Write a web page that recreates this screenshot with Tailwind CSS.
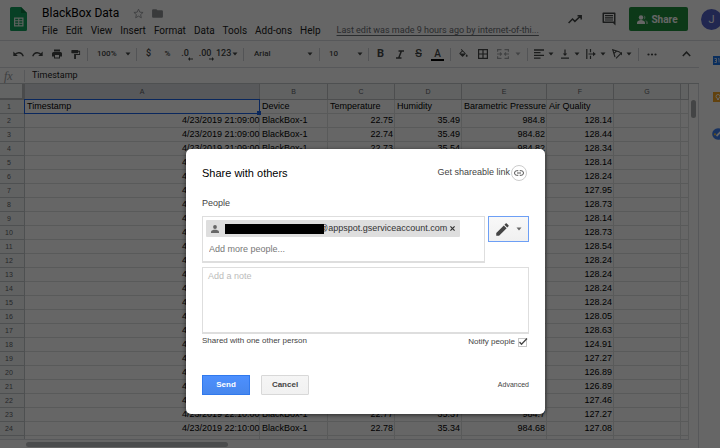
<!DOCTYPE html>
<html lang="en">
<head>
<meta charset="utf-8">
<meta name="viewport" content="width=device-width, initial-scale=1">
<title>BlackBox Data</title>
<script src="https://cdn.jsdelivr.net/npm/@tailwindcss/browser@4"></script>
</head>
<body class="relative h-screen overflow-hidden bg-white font-[Roboto,sans-serif] text-[#222]">

<svg class="hidden" aria-hidden="true">
  <symbol id="caret" viewBox="0 0 6 4"><path d="M0.5 0.5h5L3 3.4z" fill="currentColor"/></symbol>
</svg>

<div class="flex h-full flex-col">
  <header class="flex h-[41px] shrink-0 border-b border-[#dadce0]">
    <a href="#" aria-label="Sheets home" class="ml-[10px] mt-[7px] block shrink-0">
      <svg class="h-[24px] w-[17px]" viewBox="0 0 17 24"><path d="M1.5 0H11l6 6v16.5a1.5 1.5 0 0 1-1.5 1.5h-14A1.5 1.5 0 0 1 0 22.5v-21A1.5 1.5 0 0 1 1.5 0z" fill="#12a05c"/><path d="M11 0l6 6h-6z" fill="#0b7a43"/><path fill-rule="evenodd" d="M4 10.500h9.500v9H4zM5.200 11.700v1.500h3v-1.500zM9.300 11.700v1.500h3v-1.500zM5.200 14.200v1.600h3v-1.600zM9.300 14.200v1.600h3v-1.600zM5.200 16.800v1.500h3v-1.500zM9.300 16.800v1.500h3v-1.500z" fill="#e8f3ec"/></svg>
    </a>
    <div class="ml-[15px] min-w-0 flex-1">
      <div class="mt-[5px] flex h-[16px] items-center">
        <h1 class="text-[12px] leading-4 text-black">BlackBox Data</h1>
        <button aria-label="Star" class="ml-[14px]"><svg class="size-[11px]" viewBox="0 0 24 24" fill="none" stroke="#9a9da1" stroke-width="2"><path d="M12 2.500l2.900 6.600 7.100.600-5.400 4.700 1.600 7L12 17.700l-6.200 3.700 1.600-7L2 9.700l7.100-.600z"/></svg></button>
        <button aria-label="Move to folder" class="ml-[7px]"><svg class="size-[13px]" viewBox="0 0 24 24" fill="#8e9195"><path d="M10 4H4a2 2 0 0 0-2 2v12a2 2 0 0 0 2 2h16a2 2 0 0 0 2-2V8a2 2 0 0 0-2-2h-8z"/></svg></button>
      </div>
      <nav class="mt-[3px] flex h-[13px] items-center gap-2 whitespace-nowrap text-[10px] leading-[13px]">
        <button>File</button><button>Edit</button><button>View</button><button>Insert</button><button>Format</button><button>Data</button><button>Tools</button><button>Add-ons</button><button>Help</button>
        <a href="#" class="ml-2 text-[9px] text-[#6a6e73] underline underline-offset-2">Last edit was made 9 hours ago by internet-of-thi...</a>
      </nav>
    </div>
    <div class="flex h-[38px] shrink-0 items-center">
      <button aria-label="Activity"><svg class="h-[9px] w-[14px]" viewBox="0 0 14 9" fill="none" stroke="#444746" stroke-width="1.500"><path d="M.6 8L4.500 4l2.400 2.400L12.500 1M9.500.800h3.700v3.700"/></svg></button>
      <button aria-label="Comments" class="ml-[20px]"><svg class="size-[14px]" viewBox="0 0 14 14"><path fill-rule="evenodd" d="M1.200.500h11.600c.5 0 .7.300.7.700v12.300L11 11H1.200C.8 11 .5 10.800.5 10.300V1.200c0-.4.3-.7.7-.7zM2 1.900v7.700h10V1.900z" fill="#444746"/><path d="M3 3h8v1.200H3zM3 5.200h8v1.200H3zM3 7.400h8v1.200H3z" fill="#444746"/></svg></button>
      <button class="ml-[13px] flex h-[24px] w-[59px] items-center justify-center gap-[3px] rounded-[2px] bg-[#1e8e3e] pr-[2px] text-[10px] font-bold text-white">
        <svg class="h-[9px] w-[11px]" viewBox="0 0 22 18" fill="currentColor"><circle cx="8" cy="5" r="4.500"/><path d="M0 18v-3c0-3 5-5 8-5s8 2 8 5v3z"/><path d="M13 1a4 4 0 1 1 0 8c1.500-2 1.500-6 0-8zM16 10.500c3 .6 6 2 6 4.500v3h-4v-3c0-2-.7-3.300-2-4.500z" opacity=".5"/></svg>
        Share
      </button>
      <button aria-label="Account" class="-mr-[2px] ml-[13px] size-[21px] rounded-full bg-[#5361c9] text-[11px] leading-[21px] text-white">J</button>
    </div>
  </header>

  <div class="flex min-h-0 flex-1">
    <main class="flex min-w-0 flex-1 flex-col">
      <div role="toolbar" aria-label="Formatting" class="flex h-[27px] shrink-0 items-center border-b border-[#dadce0] pl-[9px] text-[8px] font-medium text-[#444746]">
        <button aria-label="Undo" class="flex w-[19px] justify-center"><svg class="h-[6px] w-[11px]" viewBox="0 0 11 6" fill="none" stroke="currentColor" stroke-width="1.300"><path d="M1.500 4C4 .800 8.500.800 10.300 5.200"/><path d="M.300.500V5h4.500z" fill="currentColor" stroke="none"/></svg></button>
        <button aria-label="Redo" class="flex w-[19px] justify-center"><svg class="h-[6px] w-[11px]" viewBox="0 0 11 6" fill="none" stroke="currentColor" stroke-width="1.300"><path d="M9.500 4C7 .800 2.500.800.700 5.200"/><path d="M10.700.500V5H6.200z" fill="currentColor" stroke="none"/></svg></button>
        <button aria-label="Print" class="flex w-[19px] justify-center"><svg class="size-[12px]" viewBox="0 0 24 24" fill="currentColor"><path d="M19 8H5a3 3 0 0 0-3 3v6h4v4h12v-4h4v-6a3 3 0 0 0-3-3zm-3 11H8v-5h8zM18 3H6v4h12z"/></svg></button>
        <button aria-label="Paint format" class="flex w-[19px] justify-center"><svg class="size-[11px]" viewBox="0 0 24 24" fill="currentColor"><path d="M18 4V3a1 1 0 0 0-1-1H4a1 1 0 0 0-1 1v5a1 1 0 0 0 1 1h13a1 1 0 0 0 1-1V6h2v5H9v10a1 1 0 0 0 1 1h2a1 1 0 0 0 1-1v-8h9V4z"/></svg></button>
        <span class="ml-[2px] h-[13px] w-px bg-[#d0d3d7]"></span>
        <label class="grid w-[48px] items-center"><select aria-label="Zoom" class="col-start-1 row-start-1 w-full appearance-none pl-[9px]"><option>100%</option></select><svg class="col-start-1 row-start-1 mr-[5px] h-[4px] w-[6px] justify-self-end"><use href="#caret"/></svg></label>
        <span class="h-[13px] w-px bg-[#d0d3d7]"></span>
        <button aria-label="Currency" class="ml-[2px] w-[19px] text-[9px]">$</button>
        <button aria-label="Percent" class="w-[19px]">%</button>
        <button aria-label="Decrease decimals" class="relative w-[16px] text-[9px]">.0<svg class="absolute right-0 top-[10px] h-[4px] w-[5px]" viewBox="0 0 5 4"><path d="M5 1.500H2V0L0 2l2 2V2.500h3z" fill="currentColor"/></svg></button>
        <button aria-label="Increase decimals" class="relative ml-[3px] w-[18px] text-[9px]">.00<svg class="absolute right-0 top-[10px] h-[4px] w-[5px]" viewBox="0 0 5 4"><path d="M0 1.500h3V0l2 2-2 2V2.500H0z" fill="currentColor"/></svg></button>
        <button aria-label="More formats" class="ml-[2px] flex w-[22px] items-center justify-between text-[9px]">123<svg class="h-[4px] w-[6px]"><use href="#caret"/></svg></button>
        <span class="ml-[5px] h-[13px] w-px bg-[#d0d3d7]"></span>
        <label class="grid w-[75px] items-center"><select aria-label="Font" class="col-start-1 row-start-1 w-full appearance-none pl-[10px]"><option>Arial</option></select><svg class="col-start-1 row-start-1 mr-[6px] h-[4px] w-[6px] justify-self-end"><use href="#caret"/></svg></label>
        <span class="h-[13px] w-px bg-[#d0d3d7]"></span>
        <label class="grid w-[48px] items-center"><select aria-label="Font size" class="col-start-1 row-start-1 w-full appearance-none pl-[9px]"><option>10</option></select><svg class="col-start-1 row-start-1 mr-[5px] h-[4px] w-[6px] justify-self-end"><use href="#caret"/></svg></label>
        <span class="mr-[2px] h-[13px] w-px bg-[#d0d3d7]"></span>
        <button aria-label="Bold" class="w-[19px] text-[11px] font-bold">B</button>
        <button aria-label="Italic" class="flex w-[19px] justify-center"><svg class="h-[9px] w-[8px]" viewBox="0 0 8 9" fill="none" stroke="currentColor" stroke-width="1.500"><path d="M2.500 1H8M0 8h5.500M5.400 1L2.700 8"/></svg></button>
        <button aria-label="Strikethrough" class="w-[19px] text-[11px] line-through">S</button>
        <button aria-label="Text colour" class="flex w-[19px] flex-col items-center text-[10px] leading-[11px]">A<span class="h-[2px] w-[13px] bg-black"></span></button>
        <span class="mx-[3px] h-[13px] w-px bg-[#d0d3d7]"></span>
        <button aria-label="Fill colour" class="flex w-[19px] justify-center"><svg class="size-[11px]" viewBox="0 0 24 24" fill="currentColor"><path fill-rule="evenodd" d="M16.600 9L7.600 0 6.200 1.400l2.400 2.400-5.200 5.100c-.6.600-.6 1.600 0 2.200l5.500 5.500c.6.600 1.600.600 2.200 0l5.500-5.500c.5-.6.500-1.500-.1-2.100zM5.200 10L10 5.200l4.800 4.800z"/><path d="M19 11.500s-2 2.200-2 3.500a2 2 0 0 0 4 0c0-1.300-2-3.500-2-3.500z"/></svg></button>
        <button aria-label="Borders" class="flex w-[19px] justify-center"><svg class="size-[10px]" viewBox="0 0 10 10" fill="none" stroke="currentColor" stroke-width="1.200"><path d="M.6.600h8.800v8.800H.6zM5 .600v8.800M.6 5h8.800"/></svg></button>
        <button aria-label="Merge cells" class="ml-[5px] flex w-[29px] items-center gap-[6px] text-[#a5a8ab]"><svg class="h-[10px] w-[12px]" viewBox="0 0 12 10" fill="none" stroke="currentColor" stroke-width="1.200"><path d="M4.500.600H.6v2.200M.6 7.200v2.200h3.900M7.500.600h3.900v2.200M11.400 7.200v2.200H7.500M0 5h4M12 5H8M3 3.500L4.500 5 3 6.500M9 3.500L7.500 5 9 6.500"/></svg><svg class="h-[4px] w-[6px]"><use href="#caret"/></svg></button>
        <span class="ml-[1px] mr-[6px] h-[13px] w-px bg-[#d0d3d7]"></span>
        <button aria-label="Horizontal align" class="flex w-[26px] items-center gap-[4px]"><svg class="size-[10px]" viewBox="0 0 10 10" stroke="currentColor" stroke-width="1.300"><path d="M0 1h10M0 3.700h6.500M0 6.400h10M0 9.100h6.500"/></svg><svg class="h-[4px] w-[6px]"><use href="#caret"/></svg></button>
        <button aria-label="Vertical align" class="flex w-[26px] items-center gap-[4px]"><svg class="size-[10px]" viewBox="0 0 10 10" stroke="currentColor" stroke-width="1.200"><path d="M1 9.200h8M5 .500V5"/><path d="M2.800 4.500h4.400L5 7z" fill="currentColor" stroke="none"/></svg><svg class="h-[4px] w-[6px]"><use href="#caret"/></svg></button>
        <button aria-label="Text wrapping" class="flex w-[26px] items-center gap-[4px]"><svg class="size-[10px]" viewBox="0 0 10 10" stroke="currentColor" stroke-width="1.200"><path d="M.8 0v10M4.500 0v3.200M4.500 6.800V10M2.500 5h5"/><path d="M7 2.800L9.800 5 7 7.200z" fill="currentColor" stroke="none"/></svg><svg class="h-[4px] w-[6px]"><use href="#caret"/></svg></button>
        <button aria-label="Text rotation" class="flex w-[26px] items-center gap-[4px]"><svg class="size-[10px]" viewBox="0 0 10 10" fill="none" stroke="currentColor" stroke-width="1.100"><path d="M3 8L.7.700l7 2.200M1.800 4.600L4.700 1.900M4 9.300L8.700 4.600"/><path d="M10 3.300v3.200L6.800 3.300z" fill="currentColor" stroke="none"/></svg><svg class="h-[4px] w-[6px]"><use href="#caret"/></svg></button>
        <span class="mr-[3px] h-[13px] w-px bg-[#d0d3d7]"></span>
        <button aria-label="More" class="flex w-[19px] justify-center"><svg class="h-[3px] w-[10px]" viewBox="0 0 10 3" fill="currentColor"><circle cx="1.500" cy="1.500" r="1.100"/><circle cx="5" cy="1.500" r="1.100"/><circle cx="8.500" cy="1.500" r="1.100"/></svg></button>
        <button aria-label="Hide the menus" class="ml-auto mr-[8px]"><svg class="h-[6px] w-[9px]" viewBox="0 0 9 6" fill="none" stroke="currentColor" stroke-width="1.500"><path d="M.8 5l3.700-3.800L8.200 5"/></svg></button>
      </div>

      <div class="flex h-[15px] shrink-0 items-center">
        <label for="formula" class="w-[25px] border-r border-[#dadce0] pl-[4px] font-['Liberation_Serif',serif] text-[12px] italic leading-[12px] text-[#9a9da1]">fx</label>
        <input id="formula" value="Timestamp" class="min-w-0 flex-1 pl-[7px] text-[9px] outline-none">
      </div>

      <div class="flex min-h-0 flex-1 border-t border-[#c4c7ca]">
        <div class="flex min-w-0 flex-1 flex-col">
          <div class="relative h-[355px] overflow-hidden">
            <table class="w-full table-fixed border-separate border-spacing-0 font-['Liberation_Sans',sans-serif] text-[9px] leading-[13px] text-black">
              <colgroup><col class="w-[25px]"><col><col class="w-[68px]"><col class="w-[67px]"><col class="w-[67px]"><col class="w-[85px]"><col class="w-[67px]"><col class="w-[67px]"><col class="w-[8px]"></colgroup>
              <thead class="text-[7px] text-[#5f6368]">
                <tr class="h-[16px]">
                  <th class="border-b-2 border-r-3 border-[#b9bbbd] bg-[#f8f9fa]"></th>
                  <th class="border-b border-r border-[#c0c3c6] bg-[#dddfe3] p-0 font-normal">A</th>
                  <th class="border-b border-r border-[#c0c3c6] bg-[#f3f6f5] p-0 font-normal">B</th>
                  <th class="border-b border-r border-[#c0c3c6] bg-[#f3f6f5] p-0 font-normal">C</th>
                  <th class="border-b border-r border-[#c0c3c6] bg-[#f3f6f5] p-0 font-normal">D</th>
                  <th class="border-b border-r border-[#c0c3c6] bg-[#f3f6f5] p-0 font-normal">E</th>
                  <th class="border-b border-r border-[#c0c3c6] bg-[#f3f6f5] p-0 font-normal">F</th>
                  <th class="border-b border-r border-[#c0c3c6] bg-[#f3f6f5] p-0 font-normal">G</th>
                  <th class="border-b border-r border-[#c0c3c6] bg-[#f3f6f5] p-0"></th>
                </tr>
              </thead>
              <tbody id="rows"></tbody>
            </table>
          </div>
          <div class="flex flex-1 items-start border-t border-[#dadce0] pl-[26px] pt-[2px]"><span class="h-[5px] w-[202px] rounded-full bg-[#bcbec0]"></span></div>
        </div>
        <div class="w-[10px] border-r border-[#dadce0] pt-[16px]"><span class="ml-[2px] block h-[18px] w-[5px] rounded-full bg-[#a8aaac]"></span></div>
      </div>
    </main>

    <aside class="flex w-[21px] shrink-0 flex-col items-end overflow-hidden pt-[15px]">
      <button aria-label="Calendar" class="w-[7px] overflow-hidden"><svg class="h-[9px] w-[10px]" viewBox="0 0 10 9"><path d="M0 0h10v9H0z" fill="#1a73e8"/><path d="M1.500 2.500h2v4h-2M2 4.500h1.500M5 3l1-.5v4" fill="none" stroke="#dbe7fb" stroke-width=".9"/></svg></button>
      <button aria-label="Keep" class="mt-[27px] w-[7px] overflow-hidden"><svg class="h-[10px] w-[10px]" viewBox="0 0 10 10"><path d="M0 0h10v10H0z" fill="#f5a623"/><circle cx="5" cy="4.500" r="2" fill="none" stroke="#fff"/><path d="M4 7.500h2" stroke="#fff"/></svg></button>
      <button aria-label="Tasks" class="mt-[26px] w-[8px] overflow-hidden"><svg class="size-[12px]" viewBox="0 0 12 12"><circle cx="6" cy="6" r="5.800" fill="#3f7ff0"/><path d="M4.500 8L10 2.500" stroke="#fff" stroke-width="1.800"/><circle cx="3" cy="6.300" r="1.100" fill="#f9c440"/></svg></button>
    </aside>
  </div>
</div>

<div class="absolute inset-0 bg-black/60"></div>

<div class="absolute inset-0 flex items-start justify-center pl-[11px] pt-[149px] font-['Liberation_Sans',sans-serif]">
  <form role="dialog" aria-labelledby="share-title" class="w-[359px] rounded-[5px] bg-white px-4 pb-[19px] pt-4 text-[9px] text-[#444] shadow-[0_1px_4px_rgba(0,0,0,0.6)]">
    <div class="flex h-4 items-center justify-between">
      <h2 id="share-title" class="text-[11px] text-black">Share with others</h2>
      <button type="button" class="flex items-center gap-px pr-[2px]">Get shareable link
        <span class="flex size-4 items-center justify-center rounded-full border border-[#ccc]"><svg class="h-[6px] w-[10px]" viewBox="0 0 10 6" fill="none" stroke="#555" stroke-width="1"><path d="M4.300.700H2.800a2.300 2.300 0 0 0 0 4.600h1.500M5.700.700h1.500a2.300 2.300 0 0 1 0 4.600H5.700M3 3h4"/></svg></span>
      </button>
    </div>
    <label for="people" class="mt-4 block leading-[12px]">People</label>
    <div class="mt-[7px] flex items-start gap-[3px]">
      <div class="h-[47px] min-w-0 flex-1 border border-b-2 border-[#dedede] px-[3px] pt-[3px]">
        <div class="flex h-[17px] w-[254px] items-center rounded-[1px] bg-[#dedede] text-[#333]">
          <svg class="ml-[5px] size-[8px] shrink-0" viewBox="0 0 8 8" fill="#666"><circle cx="4" cy="2" r="1.900"/><path d="M0 8V6.800C0 5.400 2.600 4.800 4 4.800s4 .6 4 2V8z"/></svg>
          <span class="z-10 ml-[6px] h-[10px] w-[99px] shrink-0 bg-black"></span>
          <span class="-ml-[5px]">@appspot.gserviceaccount.com</span>
          <button type="button" aria-label="Remove" class="ml-[3px]"><svg class="size-[5px]" viewBox="0 0 5 5" stroke="#333" stroke-width="1.200"><path d="M.4.400l4.200 4.200M4.600.400L.4 4.600"/></svg></button>
        </div>
        <input id="people" placeholder="Add more people..." class="mt-[6px] block h-[12px] w-full pl-[3px] leading-[12px] outline-none placeholder:text-[#777]">
      </div>
      <button type="button" aria-label="Can edit" class="flex h-[26px] w-[41px] items-center justify-center gap-[6px] border border-[#6d9ff5] bg-linear-to-b from-[#f8f8f8] to-[#f0f0f0]">
        <svg class="size-[15px]" viewBox="0 0 24 24" fill="#444"><path d="M2 17.500V22h4.500L18.600 9.900l-4.500-4.500zM21.600 6.900c.5-.5.5-1.200 0-1.700l-2.800-2.800c-.5-.5-1.200-.5-1.700 0l-2 2 4.500 4.500z"/></svg>
        <svg class="h-[4px] w-[6px] text-[#666]"><use href="#caret"/></svg>
      </button>
    </div>
    <textarea aria-label="Note" placeholder="Add a note" class="mt-[4px] block h-[67px] w-full resize-none border border-b-2 border-[#dedede] px-[5px] py-[2px] leading-[12px] outline-none placeholder:text-[#bbb]"></textarea>
    <div class="mt-[2px] flex h-[14px] items-start justify-between text-[8px] leading-[10px]">
      <span>Shared with one other person</span>
      <label class="flex items-center gap-[3px] pr-[2px] pt-[1px]">Notify people
        <span class="grid size-[9px]">
          <input type="checkbox" checked class="col-start-1 row-start-1 size-[9px] appearance-none border border-[#c6c6c6]">
          <svg class="pointer-events-none col-start-1 row-start-1 size-[9px] overflow-visible" viewBox="0 0 9 9" fill="none" stroke="#444" stroke-width="1.300"><path d="M1.500 4l2 2.300L9 .500"/></svg>
        </span>
      </label>
    </div>
    <div class="mt-[25px] flex h-5 items-center text-[8px]">
      <button type="submit" class="h-5 w-[48px] border border-[#3079ed] bg-linear-to-b from-[#4d90fe] to-[#4787ed] font-bold text-white">Send</button>
      <button type="button" class="ml-[11px] h-5 w-[48px] rounded-[1px] border border-[#d8d8d8] bg-linear-to-b from-[#f5f5f5] to-[#f1f1f1] font-bold text-[#444]">Cancel</button>
      <a href="#" class="ml-auto text-[7px]">Advanced</a>
    </div>
  </form>
</div>

<script>
  // Columns: time, device, temperature, humidity, pressure, air quality
  const d = "4/23/2019 ";
  const data = [
    [d + "21:09:00", "BlackBox-1", "22.75", "35.49", "984.8", "128.14"],
    [d + "21:09:00", "BlackBox-1", "22.74", "35.49", "984.82", "128.44"],
    [d + "21:09:00", "BlackBox-1", "22.73", "35.54", "984.82", "128.34"],
    ...["128.14", "128.24", "127.95", "128.73", "128.14", "128.73", "128.54", "128.24", "128.24", "128.24", "128.24", "128.05", "128.63", "124.91", "127.27", "126.89", "126.89", "127.46"].map(q => ["4/23", "", "", "", "", q]),
    [d + "22:10:00", "BlackBox-1", "22.77", "35.37", "984.7", "127.27"],
    [d + "22:10:00", "BlackBox-1", "22.78", "35.34", "984.68", "127.08"],
    ["", "", "", "", "", ""]
  ];
  const num = n => `<th class="border-b border-r border-[#c4c7ca] bg-[#f3f6f5] p-0 pr-[6px] text-[7px] font-normal text-[#5f6368]">${n}</th>`;
  const right = v => `<td class="overflow-hidden whitespace-nowrap border-b border-r border-[#dfe0e1] p-0 pr-[1px] text-right">${v}</td>`;
  const left = v => `<td class="whitespace-nowrap border-b border-r border-[#dfe0e1] p-0 pl-[2px] text-left">${v}</td>`;
  const time = v => v ? `<td class="border-b border-r border-[#dfe0e1] p-0"><span class="ml-auto block w-[77px] whitespace-nowrap">${v}</span></td>` : left("");
  const active = `<td class="relative border-b border-r border-[#dfe0e1] p-0 pl-[2px]">Timestamp<span class="absolute -inset-[1px] border border-[#1a62e8]"></span><span class="absolute -bottom-[2px] -right-[2px] size-[4px] bg-[#1a62e8]"></span></td>`;
  const row = (n, cells) => `<tr class="h-[14px]">${num(n)}${cells}${left("")}${left("")}</tr>`;
  document.getElementById("rows").innerHTML =
    row(1, active + ["Device", "Temperature", "Humidity", "Barametric Pressure", "Air Quality"].map(left).join("")) +
    data.map((r, i) => row(i < 23 ? i + 2 : "", time(r[0]) + left(r[1]) + r.slice(2).map(right).join(""))).join("");
</script>
</body>
</html>
